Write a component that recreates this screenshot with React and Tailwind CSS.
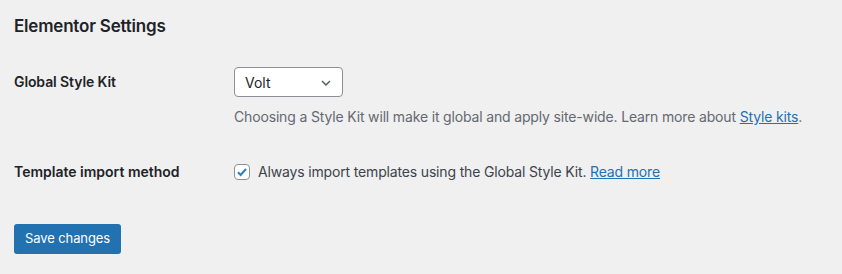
import React from "react";

export default function App() {
  return (
    <div
      className="min-h-screen w-full bg-[#f0f0f1] px-[14px] pt-[14px] text-[#1d2327]"
      style={{ fontFamily: "Inter, 'Liberation Sans', sans-serif" }}
    >
      <h2 className="text-[17px] leading-[24px] font-semibold tracking-[-0.2px]">Elementor Settings</h2>

      {/* Global Style Kit */}
      <div className="mt-[29px] flex">
        <div className="w-[220px] shrink-0 pt-[5px] text-[14px] leading-[20px] font-semibold tracking-[-0.1px]">
          Global Style Kit
        </div>
        <div>
          <div className="relative flex h-[30px] w-[109px] items-center rounded-[4px] border border-[#8c8f94] bg-white pl-[10px] text-[14px]">
            Volt
            <svg
              className="absolute right-[10px] top-[9px]"
              width="12"
              height="12"
              viewBox="0 0 12 12"
              fill="none"
              stroke="#50575e"
              strokeWidth="1.4"
            >
              <path d="M2 4l4 4 4-4" />
            </svg>
          </div>
          <p className="mt-[10px] text-[14px] leading-[20px] tracking-[-0.16px] text-[#646970]">
            Choosing a Style Kit will make it global and apply site-wide. Learn more about{" "}
            <a href="#" className="text-[#2271b1] underline">
              Style kits
            </a>
            .
          </p>
        </div>
      </div>

      {/* Template import method */}
      <div className="mt-[35px] flex items-center">
        <div className="w-[220px] shrink-0 text-[14px] leading-[20px] font-semibold">
          Template import method
        </div>
        <label className="flex items-center gap-[8px] text-[14px] leading-[20px] tracking-[-0.16px] text-[#3c434a]">
          <span className="flex h-[16px] w-[16px] items-center justify-center rounded-[4px] border border-[#8c8f94] bg-white">
            <svg width="14" height="14" viewBox="0 0 14 14" fill="none" stroke="#3582c4" strokeWidth="2.2">
              <path d="M3 7.2l2.7 2.8L11 4" />
            </svg>
          </span>
          <span>
            Always import templates using the Global Style Kit.{" "}
            <a href="#" className="text-[#2271b1] underline">
              Read more
            </a>
          </span>
        </label>
      </div>

      <button className="mt-[42px] h-[30px] rounded-[3px] bg-[#2271b1] px-[11px] text-[13px] tracking-[-0.1px] text-white">
        Save changes
      </button>
    </div>
  );
}
